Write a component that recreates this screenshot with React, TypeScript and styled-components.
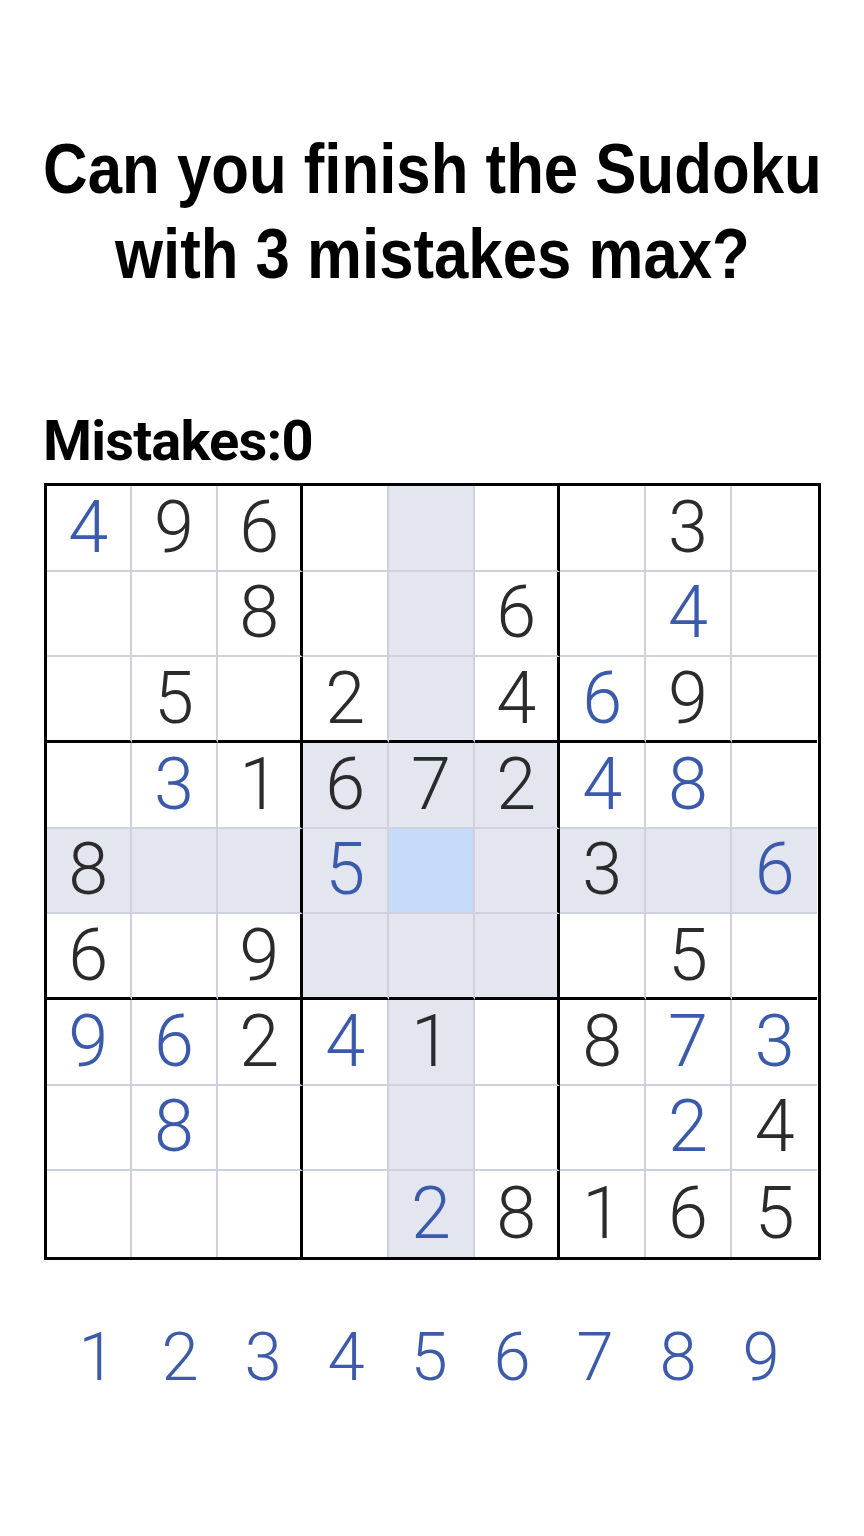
import React from 'react'
import styled, { createGlobalStyle } from 'styled-components'

type Cell = { v: number; user?: boolean }

const u = (v: number): Cell => ({ v, user: true })
const g = (v: number): Cell => ({ v })
const _ = (): Cell => ({ v: 0 })

const board: Cell[][] = [
  [u(4), g(9), g(6), _(), _(), _(), _(), g(3), _()],
  [_(), _(), g(8), _(), _(), g(6), _(), u(4), _()],
  [_(), g(5), _(), g(2), _(), g(4), u(6), g(9), _()],
  [_(), u(3), g(1), g(6), g(7), g(2), u(4), u(8), _()],
  [g(8), _(), _(), u(5), _(), _(), g(3), _(), u(6)],
  [g(6), _(), g(9), _(), _(), _(), _(), g(5), _()],
  [u(9), u(6), g(2), u(4), g(1), _(), g(8), u(7), u(3)],
  [_(), u(8), _(), _(), _(), _(), _(), u(2), g(4)],
  [_(), _(), _(), _(), u(2), g(8), g(1), g(6), g(5)],
]

const selected = { row: 4, col: 4 }

const GlobalStyle = createGlobalStyle`
  body {
    margin: 0;
    background: #ffffff;
  }
`

const Page = styled.main`
  width: 864px;
  height: 1536px;
  display: flex;
  flex-direction: column;
  align-items: center;
  background: #fff;
  overflow: hidden;
`

// condensed display face: Arial-width bold squeezed horizontally
const Title = styled.h1`
  margin: 127px 0 0;
  display: flex;
  flex-direction: column;
  align-items: center;
  font-family: 'Liberation Sans', Arial, sans-serif;
  font-weight: 700;
  font-size: 70px;
  line-height: 85px;
  white-space: nowrap;
  color: #000;
  transform: scaleX(0.882);
`

const Mistakes = styled.div`
  align-self: stretch;
  margin: 112px 0 0 43px;
  font-family: Roboto, 'Liberation Sans', sans-serif;
  font-weight: 700;
  font-size: 56px;
  line-height: 64px;
  letter-spacing: -0.8px;
  color: #000;
`

const Board = styled.div`
  margin-top: 10px;
  width: 777px;
  height: 777px;
  box-sizing: border-box;
  border: 3px solid #000;
  display: grid;
  grid-template-columns: repeat(9, 1fr);
  grid-template-rows: repeat(9, 1fr);
`

const thin = '2px solid #cdd2de'
const thick = '3px solid #000'

const Square = styled.div<{ $row: number; $col: number; $tone: 'none' | 'area' | 'selected'; $user?: boolean }>`
  box-sizing: border-box;
  display: flex;
  align-items: center;
  justify-content: center;
  border-right: ${p => (p.$col === 8 ? 'none' : p.$col % 3 === 2 ? thick : thin)};
  border-bottom: ${p => (p.$row === 8 ? 'none' : p.$row % 3 === 2 ? thick : thin)};
  background: ${p => (p.$tone === 'selected' ? '#c6dbfa' : p.$tone === 'area' ? '#e3e6ee' : '#fff')};
  font-family: Roboto, 'Liberation Sans', sans-serif;
  font-weight: 300;
  font-size: 72px;
  line-height: 1;
  color: ${p => (p.$user ? '#3b5aab' : '#2b2b2b')};
`

const Pad = styled.div`
  margin-top: 57px;
  display: flex;
  justify-content: center;
  padding-right: 6px;
`

const PadKey = styled.button`
  width: 83px;
  padding: 0;
  border: none;
  background: none;
  font-family: Roboto, 'Liberation Sans', sans-serif;
  font-weight: 300;
  font-size: 67px;
  line-height: 80px;
  color: #3d5ba9;
  text-align: center;
`

const toneFor = (r: number, c: number) => {
  if (r === selected.row && c === selected.col) return 'selected'
  const sameBox =
    Math.floor(r / 3) === Math.floor(selected.row / 3) && Math.floor(c / 3) === Math.floor(selected.col / 3)
  if (r === selected.row || c === selected.col || sameBox) return 'area'
  return 'none'
}

export default function App() {
  return (
    <Page>
      <GlobalStyle />
      <Title>
        <span>Can you finish the Sudoku</span>
        <span>with 3 mistakes max?</span>
      </Title>
      <Mistakes>Mistakes:0</Mistakes>
      <Board>
        {board.map((row, r) =>
          row.map((cell, c) => (
            <Square key={`${r}-${c}`} $row={r} $col={c} $tone={toneFor(r, c)} $user={cell.user}>
              {cell.v || ''}
            </Square>
          ))
        )}
      </Board>
      <Pad>
        {[1, 2, 3, 4, 5, 6, 7, 8, 9].map(n => (
          <PadKey key={n}>{n}</PadKey>
        ))}
      </Pad>
    </Page>
  )
}
